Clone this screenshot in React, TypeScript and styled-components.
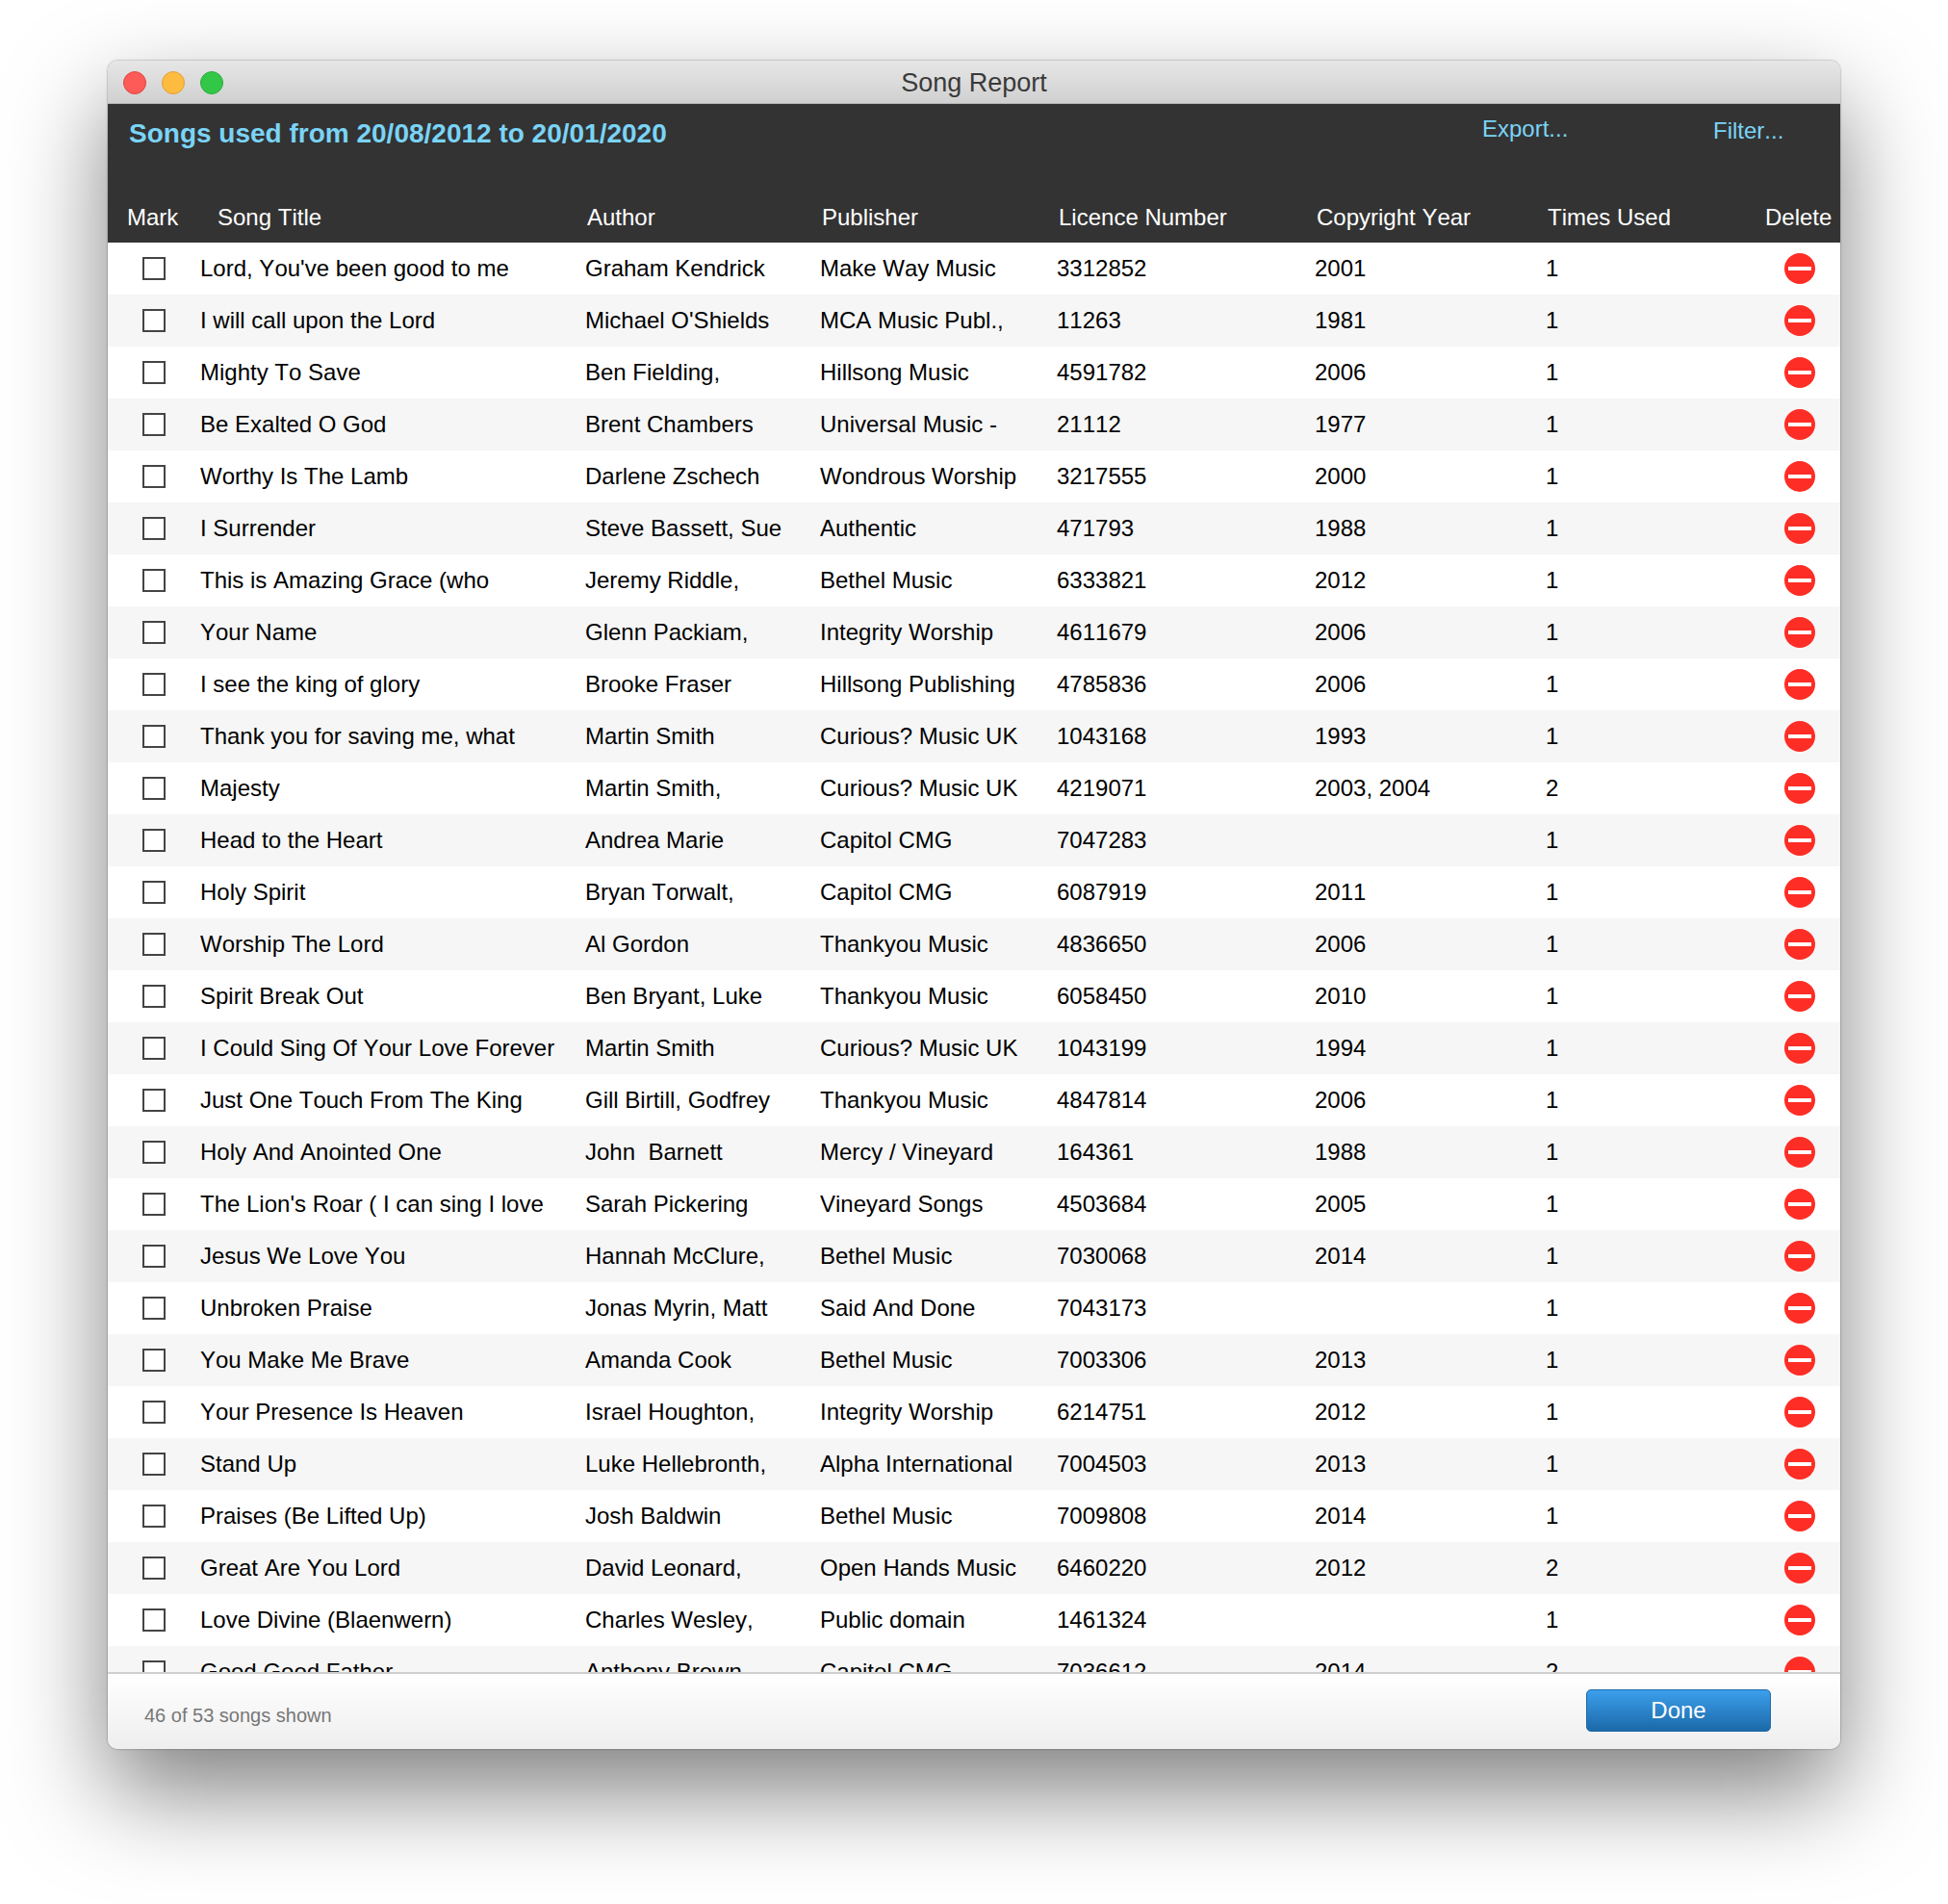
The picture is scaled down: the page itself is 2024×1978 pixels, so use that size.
import { createGlobalStyle } from "styled-components";
import styled from "styled-components";

type Song = {
  title: string;
  author: string;
  publisher: string;
  licence: string;
  year: string;
  used: number;
};

const songs: Song[] = [
  { title: "Lord, You've been good to me", author: "Graham Kendrick", publisher: "Make Way Music", licence: "3312852", year: "2001", used: 1 },
  { title: "I will call upon the Lord", author: "Michael O'Shields", publisher: "MCA Music Publ.,", licence: "11263", year: "1981", used: 1 },
  { title: "Mighty To Save", author: "Ben Fielding,", publisher: "Hillsong Music", licence: "4591782", year: "2006", used: 1 },
  { title: "Be Exalted O God", author: "Brent Chambers", publisher: "Universal Music -", licence: "21112", year: "1977", used: 1 },
  { title: "Worthy Is The Lamb", author: "Darlene Zschech", publisher: "Wondrous Worship", licence: "3217555", year: "2000", used: 1 },
  { title: "I Surrender", author: "Steve Bassett, Sue", publisher: "Authentic", licence: "471793", year: "1988", used: 1 },
  { title: "This is Amazing Grace (who", author: "Jeremy Riddle,", publisher: "Bethel Music", licence: "6333821", year: "2012", used: 1 },
  { title: "Your Name", author: "Glenn Packiam,", publisher: "Integrity Worship", licence: "4611679", year: "2006", used: 1 },
  { title: "I see the king of glory", author: "Brooke Fraser", publisher: "Hillsong Publishing", licence: "4785836", year: "2006", used: 1 },
  { title: "Thank you for saving me, what", author: "Martin Smith", publisher: "Curious? Music UK", licence: "1043168", year: "1993", used: 1 },
  { title: "Majesty", author: "Martin Smith,", publisher: "Curious? Music UK", licence: "4219071", year: "2003, 2004", used: 2 },
  { title: "Head to the Heart", author: "Andrea Marie", publisher: "Capitol CMG", licence: "7047283", year: "", used: 1 },
  { title: "Holy Spirit", author: "Bryan Torwalt,", publisher: "Capitol CMG", licence: "6087919", year: "2011", used: 1 },
  { title: "Worship The Lord", author: "Al Gordon", publisher: "Thankyou Music", licence: "4836650", year: "2006", used: 1 },
  { title: "Spirit Break Out", author: "Ben Bryant, Luke", publisher: "Thankyou Music", licence: "6058450", year: "2010", used: 1 },
  { title: "I Could Sing Of Your Love Forever", author: "Martin Smith", publisher: "Curious? Music UK", licence: "1043199", year: "1994", used: 1 },
  { title: "Just One Touch From The King", author: "Gill Birtill, Godfrey", publisher: "Thankyou Music", licence: "4847814", year: "2006", used: 1 },
  { title: "Holy And Anointed One", author: "John  Barnett", publisher: "Mercy / Vineyard", licence: "164361", year: "1988", used: 1 },
  { title: "The Lion's Roar ( I can sing I love", author: "Sarah Pickering", publisher: "Vineyard Songs", licence: "4503684", year: "2005", used: 1 },
  { title: "Jesus We Love You", author: "Hannah McClure,", publisher: "Bethel Music", licence: "7030068", year: "2014", used: 1 },
  { title: "Unbroken Praise", author: "Jonas Myrin, Matt", publisher: "Said And Done", licence: "7043173", year: "", used: 1 },
  { title: "You Make Me Brave", author: "Amanda Cook", publisher: "Bethel Music", licence: "7003306", year: "2013", used: 1 },
  { title: "Your Presence Is Heaven", author: "Israel Houghton,", publisher: "Integrity Worship", licence: "6214751", year: "2012", used: 1 },
  { title: "Stand Up", author: "Luke Hellebronth,", publisher: "Alpha International", licence: "7004503", year: "2013", used: 1 },
  { title: "Praises (Be Lifted Up)", author: "Josh Baldwin", publisher: "Bethel Music", licence: "7009808", year: "2014", used: 1 },
  { title: "Great Are You Lord", author: "David Leonard,", publisher: "Open Hands Music", licence: "6460220", year: "2012", used: 2 },
  { title: "Love Divine (Blaenwern)", author: "Charles Wesley,", publisher: "Public domain", licence: "1461324", year: "", used: 1 },
  { title: "Good Good Father", author: "Anthony Brown", publisher: "Capitol CMG", licence: "7036612", year: "2014", used: 2 },
];

const GlobalStyle = createGlobalStyle`
  html, body {
    margin: 0;
    background: #fff;
  }
  body {
    font-family: "Liberation Sans", Arial, sans-serif;
    font-kerning: none;
  }
`;

const Page = styled.div`
  width: 2024px;
  height: 1978px;
  padding: 63px 112px 0 112px;
  box-sizing: border-box;
  overflow: hidden;
`;

const Window = styled.div`
  height: 1754px;
  display: flex;
  flex-direction: column;
  border-radius: 10px;
  overflow: hidden;
  box-shadow: 0 44px 100px rgba(0, 0, 0, 0.5), 0 0 2px rgba(0, 0, 0, 0.5);
`;

const TitleBar = styled.div`
  height: 45px;
  flex: none;
  box-sizing: border-box;
  border-bottom: 1px solid #b8b8b8;
  padding-top: 2px;
  display: flex;
  align-items: center;
  justify-content: center;
  position: relative;
  background: linear-gradient(#e6e6e6, #d0d0d0);
  font-size: 27px;
  color: #3a3a3a;
`;

const Lights = styled.div`
  position: absolute;
  left: 16px;
  top: 11px;
  display: flex;
  gap: 16px;
`;

const Light = styled.span<{ $color: string; $edge: string }>`
  width: 24px;
  height: 24px;
  border-radius: 50%;
  box-sizing: border-box;
  background: ${(p) => p.$color};
  border: 1px solid ${(p) => p.$edge};
`;

const Header = styled.div`
  height: 144px;
  flex: none;
  background: #333;
  display: flex;
  flex-direction: column;
`;

const TopLine = styled.div`
  height: 92px;
  display: grid;
  grid-template-columns: 1406px 240px 1fr;
  padding-left: 22px;
  color: #7ad4f6;
`;

const ReportTitle = styled.div`
  font-size: 28px;
  font-weight: bold;
  line-height: 32px;
  padding-top: 15px;
  font-kerning: normal;
`;

const HeaderLink = styled.a<{ $top: number }>`
  font-size: 24px;
  line-height: 28px;
  padding-top: ${(p) => p.$top}px;
`;

const ColumnRow = styled.div`
  display: grid;
  grid-template-columns: 94px 384px 244px 246px 268px 240px 226px 1fr;
  padding-left: 20px;
  color: #fff;
  font-size: 24px;
  line-height: 28px;
  padding-top: 12px;
`;

const Rows = styled.div`
  flex: 1;
  min-height: 0;
  overflow: hidden;
  background: #fff;
`;

const Row = styled.div`
  height: 54px;
  display: grid;
  grid-template-columns: 96px 400px 244px 246px 268px 240px 232px 1fr;
  align-items: center;
  font-size: 24px;
  color: #000;
  white-space: pre;
  &:nth-child(even) {
    background: #f6f6f6;
  }
`;

const Cell = styled.div`
  overflow: hidden;
`;

const MarkCell = styled.div`
  display: flex;
  padding-left: 36px;
`;

const CheckBox = styled.span`
  width: 24px;
  height: 24px;
  box-sizing: border-box;
  border: 2px solid #444;
  background: #fff;
`;

const DeleteCell = styled.div`
  display: flex;
  padding-left: 16px;
`;

const DeleteIcon = styled.svg`
  width: 32px;
  height: 32px;
  display: block;
`;

const Footer = styled.div`
  height: 80px;
  flex: none;
  box-sizing: border-box;
  border-top: 2px solid #cfcfcf;
  background: linear-gradient(#fff, #eee);
  display: flex;
  align-items: center;
  justify-content: space-between;
  padding: 0 72px 0 38px;
`;

const Status = styled.div`
  font-size: 20px;
  color: #777;
  padding-top: 8px;
`;

const DoneButton = styled.button`
  width: 192px;
  height: 44px;
  box-sizing: border-box;
  border: 1px solid #1f69a8;
  border-radius: 5px;
  background: linear-gradient(#3c9fec, #1b69a8);
  color: #fff;
  font-family: inherit;
  font-kerning: none;
  font-size: 24px;
  padding: 0;
  margin-bottom: 2px;
`;

export default function App() {
  return (
    <>
      <GlobalStyle />
      <Page>
        <Window>
          <TitleBar>
            <Lights>
              <Light $color="#fc5b57" $edge="#e2463f" />
              <Light $color="#fdbc40" $edge="#e1a035" />
              <Light $color="#33c748" $edge="#2aac3a" />
            </Lights>
            Song Report
          </TitleBar>
          <Header>
            <TopLine>
              <ReportTitle>Songs used from 20/08/2012 to 20/01/2020</ReportTitle>
              <HeaderLink $top={12}>Export...</HeaderLink>
              <HeaderLink $top={14}>Filter...</HeaderLink>
            </TopLine>
            <ColumnRow>
              <span>Mark</span>
              <span>Song Title</span>
              <span>Author</span>
              <span>Publisher</span>
              <span>Licence Number</span>
              <span>Copyright Year</span>
              <span>Times Used</span>
              <span>Delete</span>
            </ColumnRow>
          </Header>
          <Rows>
            {songs.map((song) => (
              <Row key={song.title}>
                <MarkCell>
                  <CheckBox />
                </MarkCell>
                <Cell>{song.title}</Cell>
                <Cell>{song.author}</Cell>
                <Cell>{song.publisher}</Cell>
                <Cell>{song.licence}</Cell>
                <Cell>{song.year}</Cell>
                <Cell>{song.used}</Cell>
                <DeleteCell>
                  <DeleteIcon viewBox="0 0 32 32">
                    <circle cx="16" cy="16" r="16" fill="#fe2d25" />
                    <rect x="4" y="14" width="24" height="4" fill="#fff" />
                  </DeleteIcon>
                </DeleteCell>
              </Row>
            ))}
          </Rows>
          <Footer>
            <Status>46 of 53 songs shown</Status>
            <DoneButton>Done</DoneButton>
          </Footer>
        </Window>
      </Page>
    </>
  );
}
